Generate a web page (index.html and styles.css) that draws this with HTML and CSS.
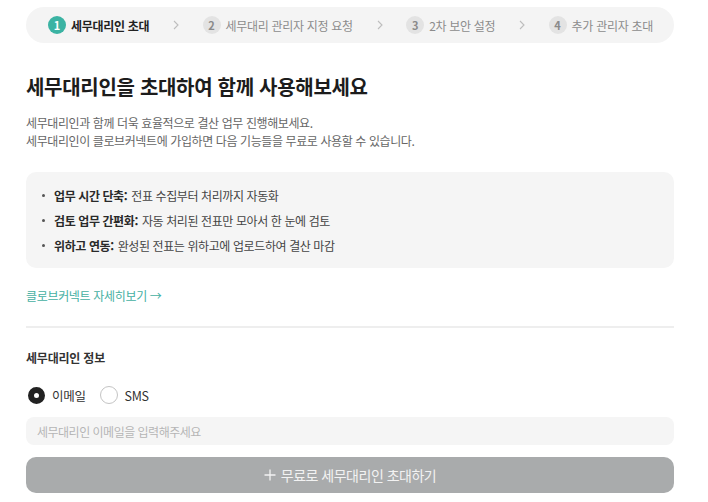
FILE: index.html
```html
<!DOCTYPE html>
<html lang="ko">
<head>
<meta charset="utf-8">
<title>세무대리인 초대</title>
<link rel="stylesheet" href="styles.css">
</head>
<body>
<div class="page">
  <nav class="stepper">
    <div class="step active"><span class="num">1</span><span class="label">세무대리인 초대</span></div>
    <svg class="chev" width="6" height="10" viewBox="0 0 6 10"><polyline points="1,1 5,5 1,9" fill="none" stroke="#bdbdbd" stroke-width="1.1"/></svg>
    <div class="step"><span class="num">2</span><span class="label">세무대리 관리자 지정 요청</span></div>
    <svg class="chev" width="6" height="10" viewBox="0 0 6 10"><polyline points="1,1 5,5 1,9" fill="none" stroke="#bdbdbd" stroke-width="1.1"/></svg>
    <div class="step"><span class="num">3</span><span class="label">2차 보안 설정</span></div>
    <svg class="chev" width="6" height="10" viewBox="0 0 6 10"><polyline points="1,1 5,5 1,9" fill="none" stroke="#bdbdbd" stroke-width="1.1"/></svg>
    <div class="step"><span class="num">4</span><span class="label">추가 관리자 초대</span></div>
  </nav>

  <h1 class="title">세무대리인을 초대하여 함께 사용해보세요</h1>
  <p class="desc">세무대리인과 함께 더욱 효율적으로 결산 업무 진행해보세요.<br>세무대리인이 클로브커넥트에 가입하면 다음 기능들을 무료로 사용할 수 있습니다.</p>

  <ul class="features">
    <li><b>업무 시간 단축:</b> 전표 수집부터 처리까지 자동화</li>
    <li><b>검토 업무 간편화:</b> 자동 처리된 전표만 모아서 한 눈에 검토</li>
    <li><b>위하고 연동:</b> 완성된 전표는 위하고에 업로드하여 결산 마감</li>
  </ul>

  <a class="more" href="#">클로브커넥트 자세히보기 →</a>

  <hr class="divider">

  <h2 class="section">세무대리인 정보</h2>

  <div class="radios">
    <label class="radio"><span class="dot on"></span>이메일</label>
    <label class="radio"><span class="dot"></span>SMS</label>
  </div>

  <div class="input">세무대리인 이메일을 입력해주세요</div>

  <button class="invite"><svg width="12" height="12" viewBox="0 0 12 12"><path d="M6 0.5V11.5M0.5 6H11.5" stroke="#f2f2f2" stroke-width="1.3"/></svg>무료로 세무대리인 초대하기</button>
</div>
</body>
</html>
```
FILE: styles.css
```css
* { box-sizing: border-box; }
html, body { margin: 0; padding: 0; background: #fff; }
body {
  font-family: "Noto Sans CJK KR", "Noto Sans", sans-serif;
  color: #222;
  letter-spacing: 0;
}
.page {
  width: 708px;
  padding: 7px 34px 0 26px;
  display: flex;
  flex-direction: column;
}
.stepper {
  height: 36px;
  background: #f4f4f4;
  border-radius: 18px;
  display: flex;
  align-items: center;
  justify-content: space-between;
  padding: 0 21px 0 22px;
}
.step {
  display: flex;
  align-items: center;
  gap: 5px;
  font-size: 12px;
  letter-spacing: -0.3px;
  color: #8c8c8c;
}
.step .num {
  width: 18px;
  height: 18px;
  border-radius: 50%;
  background: #e3e3e3;
  color: #8a8a8a;
  font-size: 11px;
  font-weight: 700;
  letter-spacing: 0;
  display: flex;
  align-items: center;
  justify-content: center;
}
.step.active .num { background: #3bb3a3; color: #fff; }
.step.active .label { color: #222; font-weight: 700; }
.chev { display: block; }

.title {
  margin: 30px 0 0;
  font-size: 20px;
  line-height: 28px;
  font-weight: 700;
  letter-spacing: -0.3px;
  color: #1c1c1c;
}
.desc {
  margin: 13px 0 0;
  font-size: 12px;
  line-height: 18px;
  letter-spacing: -0.4px;
  color: #666;
}
.features {
  margin: 22px 0 0;
  padding: 11px 16px 10px 16px;
  list-style: none;
  background: #f5f5f5;
  border-radius: 10px;
  font-size: 12px;
  line-height: 25px;
  letter-spacing: -0.4px;
  color: #444;
}
.features li { display: flex; align-items: center; }
.features li::before {
  content: "";
  width: 3px;
  height: 3px;
  border-radius: 50%;
  background: #555;
  margin-right: 9px;
}
.features b { font-weight: 700; color: #2a2a2a; margin-right: 4px; }
.more {
  margin-top: 19px;
  font-size: 12px;
  line-height: 18px;
  letter-spacing: -0.33px;
  color: #45b0a2;
  text-decoration: none;
  align-self: flex-start;
}
.divider {
  margin: 21px 0 0;
  border: 0;
  height: 2px;
  background: #eeeeee;
}
.section {
  margin: 21px 0 0;
  font-size: 12px;
  line-height: 18px;
  font-weight: 700;
  letter-spacing: -0.2px;
  color: #333;
}
.radios {
  margin-top: 18px;
  height: 20px;
  display: flex;
  align-items: center;
  gap: 14px;
  padding-left: 2px;
}
.radio {
  display: flex;
  align-items: center;
  gap: 7px;
  font-size: 12.5px;
  letter-spacing: -0.3px;
  color: #333;
}
.dot {
  width: 18px;
  height: 18px;
  border-radius: 50%;
  border: 1px solid #c4c4c4;
  background: #fff;
}
.dot.on {
  width: 17px;
  height: 17px;
  border: 6px solid #222;
}
.input {
  margin-top: 12px;
  height: 28px;
  border-radius: 8px;
  background: #f5f5f5;
  padding-left: 11px;
  display: flex;
  align-items: center;
  font-size: 12px;
  letter-spacing: -0.5px;
  color: #b5b5b5;
}
.invite {
  margin-top: 12px;
  height: 36px;
  border: 0;
  border-radius: 10px;
  background: #a9abac;
  color: #f2f2f2;
  font-family: inherit;
  font-size: 14px;
  letter-spacing: -0.5px;
  display: flex;
  align-items: center;
  justify-content: center;
  gap: 5px;
}
```
